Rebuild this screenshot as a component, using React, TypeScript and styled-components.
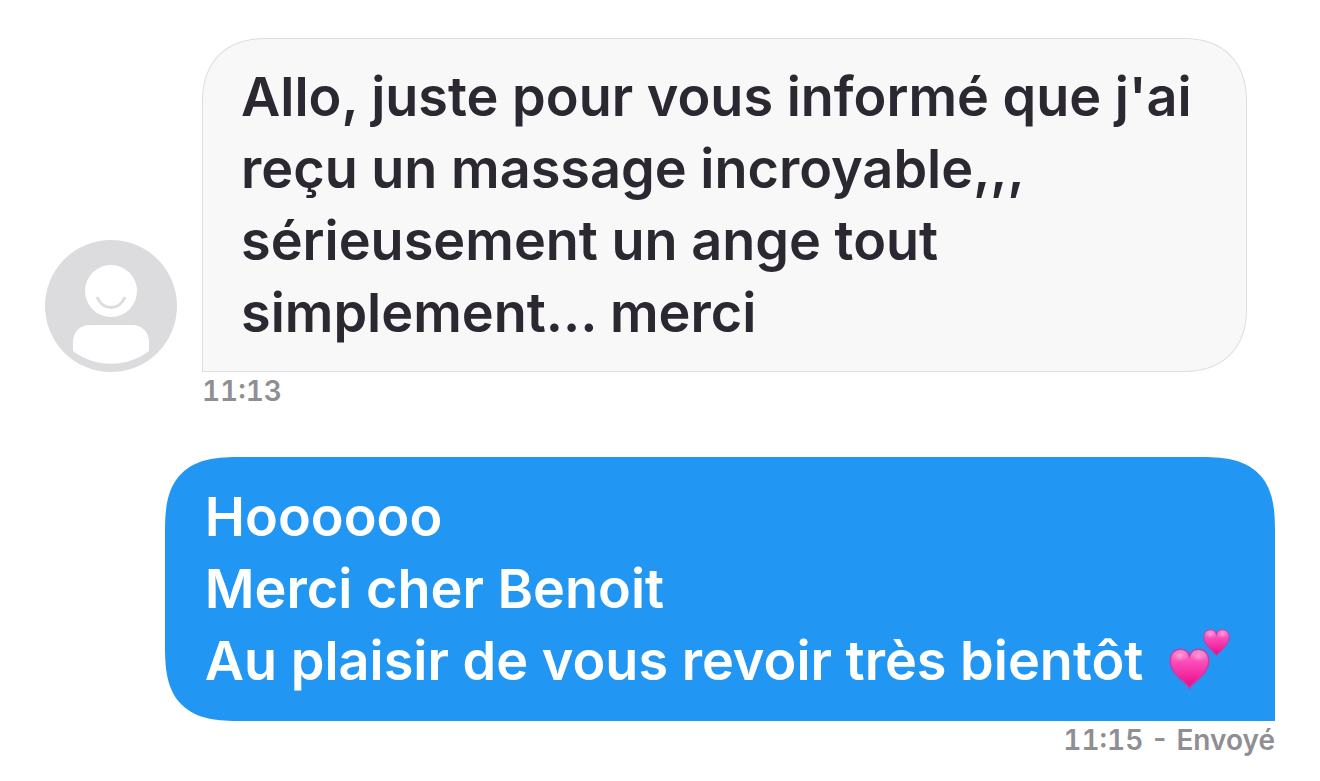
import React from "react";
import styled, { createGlobalStyle } from "styled-components";

const GlobalStyle = createGlobalStyle`
  * { box-sizing: border-box; }
  body { margin: 0; background: #fff; font-family: Inter, "Liberation Sans", sans-serif; }
`;

const Thread = styled.main`
  display: flex;
  flex-direction: column;
  gap: 47px;
  padding: 38px 45px 20px;
`;

const Message = styled.article<{ $sent?: boolean }>`
  display: flex;
  flex-direction: column;
  align-items: ${(p) => (p.$sent ? "flex-end" : "flex-start")};
`;

const Row = styled.div`
  display: flex;
  align-items: flex-end;
  gap: 25px;
`;

const Bubble = styled.div<{ $sent?: boolean }>`
  padding: ${(p) => (p.$sent ? "24px 44px 24px 40px" : "22px 54px 22px 38px")};
  border: ${(p) => (p.$sent ? "0" : "1px solid #dedee0")};
  border-radius: ${(p) => (p.$sent ? "76px 76px 0 76px" : "64px 64px 64px 0")};
  corner-shape: ${(p) => (p.$sent ? "superellipse(1.5)" : "superellipse(1.2)")};
  background: ${(p) => (p.$sent ? "#2196f3" : "#f8f8f8")};
  color: ${(p) => (p.$sent ? "#fff" : "#2b2831")};
`;

const Line = styled.p`
  margin: 0;
  font-size: 54px;
  font-weight: 600;
  line-height: 72px;
  white-space: nowrap;
`;

const Stamp = styled.footer<{ $sent?: boolean }>`
  margin-left: ${(p) => (p.$sent ? "0" : "157px")};
  color: #8e8e93;
  font-size: 28px;
  font-weight: 600;
  line-height: 38px;
  font-variant-numeric: tabular-nums;
`;

const Avatar = styled.svg`
  width: 132px;
  height: 132px;
  flex: none;
`;

const Hearts = styled.svg`
  width: 62px;
  height: 62px;
  margin-left: 12px;
  vertical-align: -10px;
`;

const HEART =
  "M50 98C43 84 3 64 3 31C3 13 14 3 28 3C39 3 47 10 50 20C53 10 61 3 72 3C86 3 97 13 97 31C97 64 57 84 50 98Z";

function TwoHearts() {
  return (
    <Hearts viewBox="0 0 62 62" role="img" aria-label="💕">
      <defs>
        <linearGradient id="heartFill" x1="0" y1="0" x2="0" y2="1">
          <stop offset="0" stopColor="#ff86cf" />
          <stop offset="0.28" stopColor="#fb52bb" />
          <stop offset="0.65" stopColor="#f42ba4" />
          <stop offset="1" stopColor="#e3087d" />
        </linearGradient>
        <radialGradient id="heartShine">
          <stop offset="0" stopColor="#ffb4e2" stopOpacity="0.8" />
          <stop offset="1" stopColor="#ff8fd2" stopOpacity="0" />
        </radialGradient>
        <g id="heart">
          <path d={HEART} fill="url(#heartFill)" stroke="#c03fae" strokeWidth="4" />
          <ellipse cx="27" cy="19" rx="20" ry="15" fill="url(#heartShine)" />
          <ellipse cx="73" cy="19" rx="20" ry="15" fill="url(#heartShine)" />
        </g>
      </defs>
      <use href="#heart" transform="translate(0 20) scale(0.41)" />
      <use href="#heart" transform="translate(34 1) scale(0.27)" />
    </Hearts>
  );
}

export default function App() {
  return (
    <>
      <GlobalStyle />
      <Thread>
        <Message>
          <Row>
            <Avatar viewBox="0 0 132 132" aria-hidden="true">
              <circle cx="66" cy="66" r="66" fill="#dcdcdf" />
              <circle cx="66" cy="51" r="26" fill="#fff" />
              <path
                d="M52 57C58 71 74 71 80 57"
                fill="none"
                stroke="#dcdcdf"
                strokeWidth="3"
              />
              <path
                d="M28 111V102C28 92 35 85 45 85H87C97 85 104 92 104 102V111C82 128 50 128 28 111Z"
                fill="#fff"
              />
            </Avatar>
            <Bubble>
              <Line>Allo, juste pour vous informé que j'ai</Line>
              <Line>reçu un massage incroyable,,,</Line>
              <Line>sérieusement un ange tout</Line>
              <Line>simplement... merci</Line>
            </Bubble>
          </Row>
          <Stamp>11:13</Stamp>
        </Message>
        <Message $sent>
          <Bubble $sent>
            <Line>Hoooooo</Line>
            <Line>Merci cher Benoit</Line>
            <Line>
              Au plaisir de vous revoir très bientôt <TwoHearts />
            </Line>
          </Bubble>
          <Stamp $sent>11:15 - Envoyé</Stamp>
        </Message>
      </Thread>
    </>
  );
}
